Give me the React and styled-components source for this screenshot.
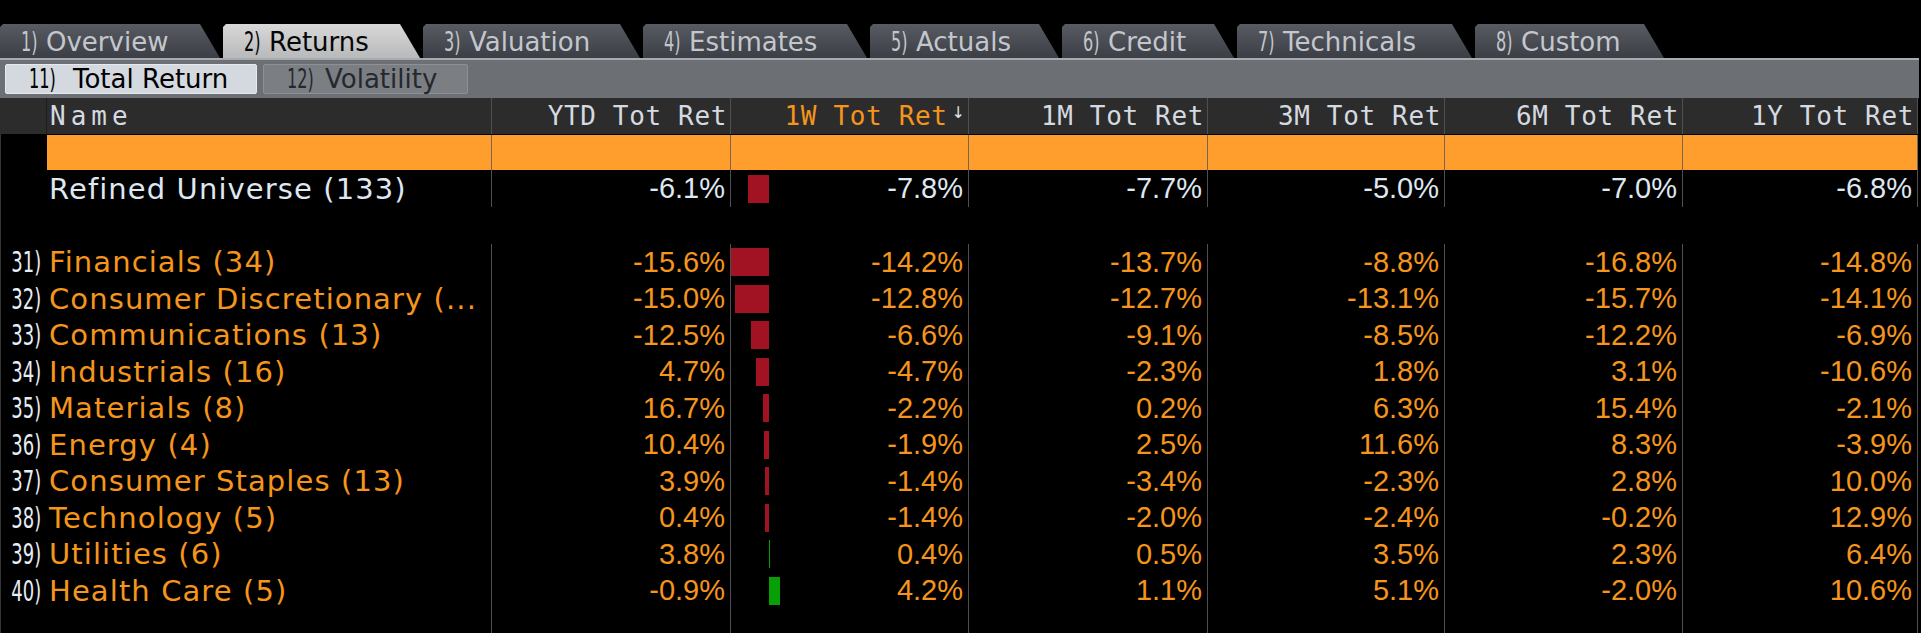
import React from 'react'
import styled, { createGlobalStyle } from 'styled-components'

const GlobalStyle = createGlobalStyle`
  *, *::before, *::after { box-sizing: border-box; }
  html, body { margin: 0; padding: 0; background: #000; }
  body {
    font-family: "DejaVu Sans", "Liberation Sans", sans-serif;
    overflow: hidden;
  }
`

const COLS = '47px 444px 239px 238px 239px 237px 238px 236px'
const LINE = '#4f4f4f'
const AMBER = '#f5951c'
const FILL = '#ff9e2c'
const MAX_BAR = 14.2
const BAR_SPAN = 38

const Screen = styled.div`
  width: 1921px;
  height: 633px;
  background: #000;
  display: flex;
  flex-direction: column;
  overflow: hidden;
`

const TabStrip = styled.div`
  display: flex;
  gap: 3px;
  height: 34px;
  margin-top: 24px;
`

const Tab = styled.div`
  width: ${p => p.$w}px;
  height: 34px;
  padding: 2px 0 0 21px;
  display: flex;
  align-items: center;
  font-size: 26px;
  white-space: nowrap;
  color: ${p => (p.$active ? '#050505' : '#c3c7cd')};
  background: ${p =>
    p.$active
      ? 'linear-gradient(#d8d8d8, #b8b9ba)'
      : 'linear-gradient(#585b62, #3b3e45)'};
  clip-path: polygon(0 3px, 3px 0, calc(100% - 20px) 0, 100% 100%, 0 100%);
`

const Num = styled.span`
  display: inline-block;
  width: ${p => p.$w}px;
  flex: none;
  white-space: nowrap;
  & > span {
    display: inline-block;
    transform: scaleX(0.62);
    transform-origin: 0 50%;
  }
`

const TabRule = styled.div`
  width: 1919px;
  height: 2px;
  background: #a7aaaf;
`

const SubBar = styled.div`
  width: 1919px;
  height: 38px;
  background: #6c6f74;
  display: flex;
  align-items: center;
  gap: 6px;
  padding-left: 5px;
`

const SubTab = styled.div`
  width: ${p => p.$w}px;
  height: 30px;
  border-radius: 2px;
  display: flex;
  align-items: center;
  padding-left: 23px;
  font-size: 26px;
  white-space: nowrap;
  color: ${p => (p.$active ? '#000' : '#25282d')};
  background: ${p => (p.$active ? '#d4d9df' : '#7b7e83')};
  border: 1px solid ${p => (p.$active ? '#e6eaee' : '#8d9095')};
`

const Table = styled.div`
  flex: 1;
  display: flex;
  flex-direction: column;
  box-shadow: inset 1px 0 0 #353535;
`

const Row = styled.div`
  display: grid;
  grid-template-columns: ${COLS};
  height: ${p => (p.$h ? `${p.$h}px` : 'auto')};
  flex: ${p => (p.$fill ? 1 : 'none')};
  margin-bottom: ${p => p.$gap || 0}px;
`

const HeadGutter = styled.div`
  background: #2c2c2c;
  border-right: 1px solid #1c1c1c;
`

const HeadCell = styled.div`
  background: #2c2c2c;
  display: flex;
  align-items: center;
  justify-content: ${p => (p.$left ? 'flex-start' : 'flex-end')};
  padding: ${p => (p.$left ? '0 0 0 3px' : '0 3px 0 0')};
  border-left: ${p => (p.$left ? 'none' : `1px solid ${LINE}`)};
  border-right: ${p => (p.$last ? `1px solid ${LINE}` : 'none')};
  font-family: "DejaVu Sans Mono", "Liberation Mono", monospace;
  font-size: 26px;
  letter-spacing: ${p => (p.$left ? 5 : 0.65)}px;
  color: ${p => (p.$sorted ? AMBER : '#d5dae0')};
  white-space: nowrap;
`

const SortArrow = styled.span`
  align-self: flex-start;
  margin: 5px 0 0 4px;
  font-family: "DejaVu Sans", sans-serif;
  font-size: 16px;
  letter-spacing: 0;
  color: #dfe4ea;
`

const Gutter = styled.div`
  display: flex;
  align-items: center;
  justify-content: flex-end;
  padding-right: 6px;
  font-size: 29px;
  color: #e6edf5;
  & > span {
    display: inline-block;
    transform: scaleX(0.62);
    transform-origin: 100% 50%;
  }
`

const FillCell = styled.div`
  background: ${p => (p.$blank ? 'transparent' : FILL)};
  border-left: ${p => (p.$line ? '1px solid #7a6550' : 'none')};
  border-right: ${p => (p.$last ? '1px solid #7a6550' : 'none')};
`

const NameCell = styled.div`
  display: flex;
  align-items: center;
  padding-left: 2px;
  font-size: 29px;
  letter-spacing: 1.1px;
  color: ${p => p.$color};
  white-space: nowrap;
  overflow: hidden;
`

const ValueCell = styled.div`
  display: flex;
  align-items: center;
  justify-content: ${p => (p.$bar ? 'space-between' : 'flex-end')};
  padding-right: 5px;
  border-left: 1px solid ${LINE};
  border-right: ${p => (p.$last ? `1px solid ${LINE}` : 'none')};
  font-family: "Liberation Sans", Arial, sans-serif;
  font-size: 29px;
  color: ${p => p.$color};
  white-space: nowrap;
`

const BarTrack = styled.div`
  display: flex;
  height: 28px;
`

const BarSide = styled.div`
  width: ${p => p.$w}px;
  display: flex;
  justify-content: ${p => (p.$neg ? 'flex-end' : 'flex-start')};
`

const Bar = styled.div`
  height: 100%;
  background: ${p => (p.$up ? '#06a006' : '#a11222')};
`

const EmptyCell = styled.div`
  border-left: ${p => (p.$line ? `1px solid ${LINE}` : 'none')};
  border-right: ${p => (p.$last ? `1px solid ${LINE}` : 'none')};
`

const tabs = [
  { n: '1)', label: 'Overview', w: 220 },
  { n: '2)', label: 'Returns', w: 197, active: true },
  { n: '3)', label: 'Valuation', w: 217 },
  { n: '4)', label: 'Estimates', w: 224 },
  { n: '5)', label: 'Actuals', w: 189 },
  { n: '6)', label: 'Credit', w: 172 },
  { n: '7)', label: 'Technicals', w: 235 },
  { n: '8)', label: 'Custom', w: 189 },
]

const headers = ['YTD Tot Ret', '1W Tot Ret', '1M Tot Ret', '3M Tot Ret', '6M Tot Ret', '1Y Tot Ret']

const universe = { name: 'Refined Universe (133)', vals: [-6.1, -7.8, -7.7, -5.0, -7.0, -6.8] }

const sectors = [
  { n: '31)', name: 'Financials (34)', vals: [-15.6, -14.2, -13.7, -8.8, -16.8, -14.8] },
  { n: '32)', name: 'Consumer Discretionary (...', vals: [-15.0, -12.8, -12.7, -13.1, -15.7, -14.1] },
  { n: '33)', name: 'Communications (13)', vals: [-12.5, -6.6, -9.1, -8.5, -12.2, -6.9] },
  { n: '34)', name: 'Industrials (16)', vals: [4.7, -4.7, -2.3, 1.8, 3.1, -10.6] },
  { n: '35)', name: 'Materials (8)', vals: [16.7, -2.2, 0.2, 6.3, 15.4, -2.1] },
  { n: '36)', name: 'Energy (4)', vals: [10.4, -1.9, 2.5, 11.6, 8.3, -3.9] },
  { n: '37)', name: 'Consumer Staples (13)', vals: [3.9, -1.4, -3.4, -2.3, 2.8, 10.0] },
  { n: '38)', name: 'Technology (5)', vals: [0.4, -1.4, -2.0, -2.4, -0.2, 12.9] },
  { n: '39)', name: 'Utilities (6)', vals: [3.8, 0.4, 0.5, 3.5, 2.3, 6.4] },
  { n: '40)', name: 'Health Care (5)', vals: [-0.9, 4.2, 1.1, 5.1, -2.0, 10.6] },
]

const pct = v => `${v.toFixed(1)}%`

// 1W column carries a small bar drawn from a zero line
const WeekBar = ({ v }) => {
  const w = Math.max(1, Math.round((Math.abs(v) / MAX_BAR) * BAR_SPAN))
  return (
    <BarTrack>
      <BarSide $w={BAR_SPAN} $neg>
        {v < 0 && <Bar style={{ width: w }} />}
      </BarSide>
      <BarSide $w={14}>
        {v >= 0 && <Bar $up style={{ width: w }} />}
      </BarSide>
    </BarTrack>
  )
}

const DataRow = ({ n, name, vals, color, h }) => (
  <Row $h={h}>
    <Gutter>{n && <span>{n}</span>}</Gutter>
    <NameCell $color={color}>{name}</NameCell>
    {vals.map((v, i) => (
      <ValueCell key={i} $color={color} $bar={i === 1} $last={i === vals.length - 1}>
        {i === 1 && <WeekBar v={v} />}
        {pct(v)}
      </ValueCell>
    ))}
  </Row>
)

const App = () => (
  <Screen>
    <GlobalStyle />
    <TabStrip>
      {tabs.map(t => (
        <Tab key={t.n} $w={t.w} $active={t.active}>
          <Num $w={25}><span>{t.n}</span></Num>
          {t.label}
        </Tab>
      ))}
    </TabStrip>
    <TabRule />
    <SubBar>
      <SubTab $w={252} $active>
        <Num $w={44}><span>11)</span></Num>
        Total Return
      </SubTab>
      <SubTab $w={205}>
        <Num $w={38}><span>12)</span></Num>
        Volatility
      </SubTab>
    </SubBar>

    <Table>
      <Row $h={36} $gap={1}>
        <HeadGutter />
        <HeadCell $left>Name</HeadCell>
        {headers.map((h, i) => (
          <HeadCell key={h} $sorted={i === 1} $last={i === headers.length - 1}>
            {h}
            {i === 1 && <SortArrow>↓</SortArrow>}
          </HeadCell>
        ))}
      </Row>

      <Row $h={35}>
        <FillCell $blank />
        <FillCell />
        {headers.map((h, i) => (
          <FillCell key={h} $line $last={i === headers.length - 1} />
        ))}
      </Row>

      <DataRow name={universe.name} vals={universe.vals} color="#dfe7f0" h={37} />
      <Row $h={37} />

      {sectors.map(s => (
        <DataRow key={s.n} n={s.n} name={s.name} vals={s.vals} color={AMBER} h={36.5} />
      ))}

      <Row $fill>
        <EmptyCell />
        <EmptyCell />
        {headers.map((h, i) => (
          <EmptyCell key={h} $line $last={i === headers.length - 1} />
        ))}
      </Row>
    </Table>
  </Screen>
)

export default App
